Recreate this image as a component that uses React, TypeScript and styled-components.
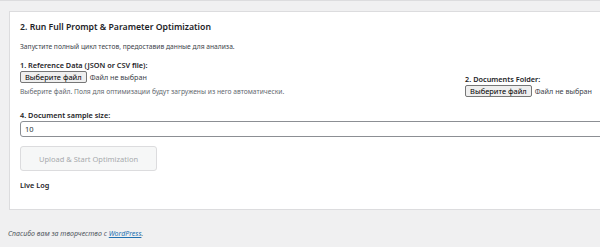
import React from 'react';
import styled, { createGlobalStyle } from 'styled-components';

const GlobalStyle = createGlobalStyle`
  html, body {
    margin: 0;
    padding: 0;
    background: #f0f0f1;
    overflow: hidden;
  }
  body {
    font-family: "Noto Sans", "Open Sans", sans-serif;
    color: #3c434a;
    font-size: 8px;
  }
`;

const Page = styled.div`
  height: 247px;
  border-top: 1px solid #dcdcde;
  box-sizing: border-box;
  padding-top: 10px;
  display: flex;
  flex-direction: column;
`;

const Card = styled.section`
  background: #fff;
  border: 1px solid #dcdcde;
  margin-left: 9px;
  margin-right: -20px;
  padding: 8px 10px 19px;
  display: flex;
  flex-direction: column;
`;

const Title = styled.h2`
  margin: 0;
  font-size: 8.7px;
  line-height: 14px;
  font-weight: 600;
  color: #1d2327;
`;

const Text = styled.p<{ $muted?: boolean }>`
  margin: 0;
  font-size: 6.7px;
  line-height: 11px;
  color: ${p => (p.$muted ? '#646970' : '#3c434a')};
`;

const Intro = styled(Text)`
  margin-top: 7px;
`;

const Hint = styled(Text)`
  margin-top: 3px;
`;

const FieldRow = styled.div`
  display: flex;
  justify-content: space-between;
  align-items: flex-end;
  margin-top: 8px;
  padding-right: 17px;
`;

const Field = styled.div`
  display: flex;
  flex-direction: column;
`;

const Label = styled.label`
  font-size: 7.3px;
  line-height: 10px;
  font-weight: 600;
  color: #1d2327;
`;

const FilePicker = styled.div`
  display: flex;
  align-items: center;
  gap: 3px;
  margin-top: 1px;
`;

const FileButton = styled.button`
  font-family: inherit;
  font-size: 7.5px;
  line-height: 10px;
  color: #000;
  background: #efefef;
  border: 1px solid #767676;
  border-radius: 2px;
  padding: 0 4px;
  height: 12px;
`;

const FileStatus = styled.span`
  font-size: 7.2px;
  color: #3c434a;
`;

const SizeField = styled(Field)`
  margin-top: 13px;
`;

const NumberInput = styled.input`
  font-family: inherit;
  font-size: 7.5px;
  color: #2c3338;
  border: 1px solid #8c8f94;
  border-radius: 3px;
  height: 16px;
  box-sizing: border-box;
  padding: 0 4px;
  margin-top: 1px;
  width: 100%;
  background: #fff;
`;

const UploadButton = styled.button`
  font-family: inherit;
  font-size: 7.5px;
  color: #a7aaad;
  background: #f6f7f7;
  border: 1px solid #dcdcde;
  border-radius: 3px;
  width: 137px;
  height: 25px;
  margin-top: 9px;
  cursor: default;
`;

const SectionLabel = styled.div`
  margin-top: 9px;
  font-size: 7.3px;
  line-height: 10px;
  font-weight: 600;
  color: #1d2327;
`;

const Footer = styled.footer`
  margin: 19px 0 0 8px;
  font-size: 7px;
  font-style: italic;
  color: #50575e;

  a {
    color: #2271b1;
    text-decoration: underline;
  }
`;

const FileInput = ({ label }: { label: string }) => (
  <Field>
    <Label>{label}</Label>
    <FilePicker>
      <FileButton type="button">Выберите файл</FileButton>
      <FileStatus>Файл не выбран</FileStatus>
    </FilePicker>
  </Field>
);

export default function App() {
  return (
    <>
      <GlobalStyle />
      <Page>
        <Card>
          <Title>2. Run Full Prompt &amp; Parameter Optimization</Title>
          <Intro>Запустите полный цикл тестов, предоставив данные для анализа.</Intro>
          <FieldRow>
            <Field>
              <FileInput label="1. Reference Data (JSON or CSV file):" />
              <Hint $muted>Выберите файл. Поля для оптимизации будут загружены из него автоматически.</Hint>
            </Field>
            <FileInput label="2. Documents Folder:" />
          </FieldRow>
          <SizeField>
            <Label>4. Document sample size:</Label>
            <NumberInput type="number" defaultValue={10} />
          </SizeField>
          <Field>
            <UploadButton type="button" disabled>Upload &amp; Start Optimization</UploadButton>
          </Field>
          <SectionLabel>Live Log</SectionLabel>
        </Card>
        <Footer>
          Спасибо вам за творчество с <a href="#">WordPress</a>.
        </Footer>
      </Page>
    </>
  );
}
